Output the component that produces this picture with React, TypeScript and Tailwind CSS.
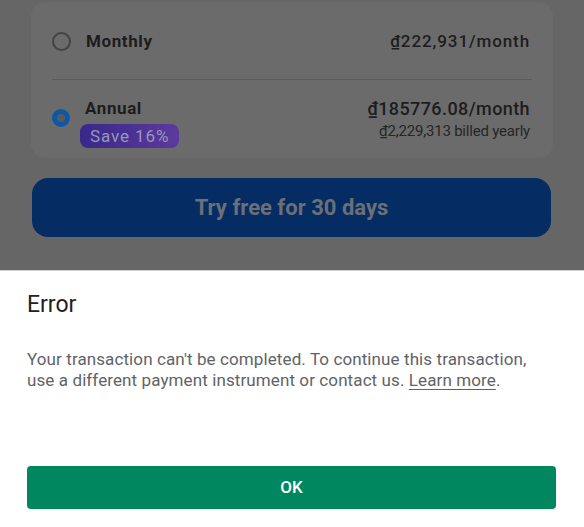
const font = { fontFamily: 'Roboto, "Noto Sans", sans-serif' };

const Radio = ({ checked }: { checked?: boolean }) =>
  checked ? (
    <span className="block h-[18px] w-[18px] rounded-full border-[5px] border-[#0b58a8] bg-[#5a5a5a]" />
  ) : (
    <span className="block h-[19px] w-[19px] rounded-full border-2 border-[#444]" />
  );

export default function App() {
  return (
    <div style={font} className="flex h-[527px] w-[584px] flex-col overflow-hidden bg-white">
      {/* dimmed page behind the sheet */}
      <div className="flex h-[270px] flex-col bg-[#666] px-[31px] pt-[2px]">
        <div className="rounded-[14px] bg-[#6b6b6b] pl-[21px] pr-[23px]">
          <div className="flex h-[77px] items-center justify-between pt-[2px]">
            <div className="flex items-center gap-[15px]">
              <Radio />
              <span className="text-[17px] font-bold tracking-[0.6px] text-[#1d1d1d]">Monthly</span>
            </div>
            <span className="text-[17px] font-medium tracking-[0.9px] text-[#1d1d1d]">₫222,931/month</span>
          </div>
          <div className="-mr-[2px] h-px bg-[#5a5a5a]" />
          <div className="flex h-[78px] items-start justify-between pt-[17px]">
            <div className="flex items-start gap-[10px]">
              <div className="mt-[12px]">
                <Radio checked />
              </div>
              <div className="flex flex-col items-start">
                <span className="ml-[5px] text-[17px] font-bold leading-[22px] tracking-[0.6px] text-[#1d1d1d]">Annual</span>
                <span className="mt-[5px] rounded-[8px] bg-gradient-to-r from-[#38288a] to-[#5c3a9c] px-[10px] text-[17px] leading-[24px] tracking-[0.9px] text-[#9a96b8]">
                  Save 16%
                </span>
              </div>
            </div>
            <div className="flex flex-col items-end">
              <span className="text-[18px] font-medium leading-[24px] tracking-[0.4px] text-[#1d1d1d]">₫185776.08/month</span>
              <span className="text-[15px] leading-[20px] tracking-[-0.2px] text-[#262626]">₫2,229,313 billed yearly</span>
            </div>
          </div>
        </div>
        <div className="ml-[1px] mt-[20px] flex h-[59px] w-[519px] items-center justify-center rounded-[16px] bg-[#052c63]">
          <span className="text-[22px] font-bold text-[#6b6f78]">Try free for 30 days</span>
        </div>
      </div>

      {/* bottom sheet */}
      <div className="flex flex-1 flex-col border-t border-[#cfcfcf] bg-white px-[27px]">
        <h2 className="mt-[19px] text-[23px] leading-[30px] text-[#202124]">Error</h2>
        <p className="mt-[29px] w-[515px] text-[17px] leading-[21px] tracking-[0.1px] text-[#5f6368]">
          Your transaction can't be completed. To continue this transaction, use a different payment instrument or contact us.{' '}
          <span className="underline underline-offset-[3px]">Learn more</span>.
        </p>
        <button className="mt-[75px] flex h-[43px] w-[529px] items-center justify-center rounded-[4px] bg-[#01875f] text-[17px] font-medium text-white">
          OK
        </button>
      </div>
    </div>
  );
}
